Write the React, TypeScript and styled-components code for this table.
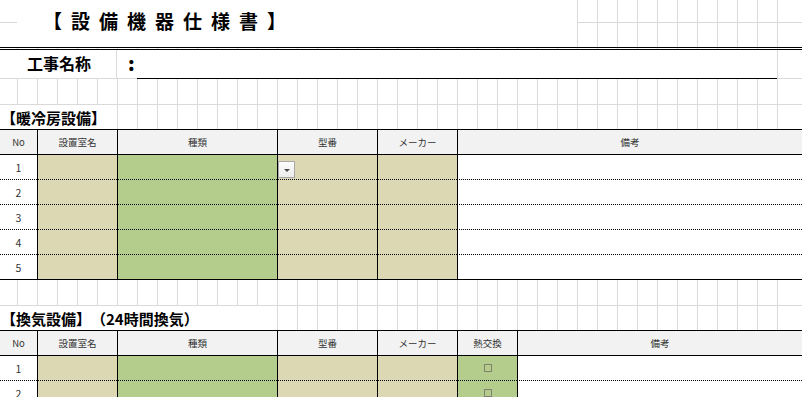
import React from "react";
import styled, { createGlobalStyle } from "styled-components";

const GRID = "#dadada";
const TAN = "#dcd8b4";
const GREEN = "#b4cc8c";
const HEAD = "#f2f2f2";

const Global = createGlobalStyle`
  html, body { margin: 0; padding: 0; background: #fff; }
  body { font-family: "Noto Sans CJK JP", "Noto Sans", sans-serif; color: #000; }
  * { box-sizing: border-box; }
`;

const Sheet = styled.div`
  width: 802px;
  height: 397px;
  overflow: hidden;
  position: relative;
  display: flex;
  flex-direction: column;
  background-color: #fff;
  background-image: linear-gradient(to right, transparent 778px, #fff 778px),
    linear-gradient(to right, ${GRID} 1px, transparent 1px);
  background-size: 100% 100%, 20px 100%;
  background-position: 0 0, 17px 0;
  background-repeat: no-repeat, repeat-x;
  text-spacing-trim: space-all;
`;

const TitleBand = styled.div`
  display: grid;
  grid-template-columns: 17px 560px 1fr;
  grid-template-rows: 23px 24px;
  height: 50px;
  flex: none;
  border-bottom: 3px double #000;
`;

const GridCell = styled.div<{ $col: number }>`
  grid-column: ${(p) => p.$col};
  grid-row: 1;
  border-bottom: 1px solid ${GRID};
`;

const TitleCell = styled.div`
  grid-column: 2;
  grid-row: 1 / 3;
  background: #fff;
  padding: 11px 0 0 26px;
  font-size: 19px;
  line-height: 19px;
  font-weight: 700;
  letter-spacing: 9px;
  white-space: nowrap;
`;

const ProjectRow = styled.div`
  display: flex;
  height: 29px;
  flex: none;
  background: #fff;
`;

const LabelCell = styled.div`
  width: 117px;
  border-right: 1px solid ${GRID};
  border-bottom: 1px solid ${GRID};
  padding: 0 0 2px 27px;
  display: flex;
  align-items: center;
  font-size: 16px;
  font-weight: 700;
  white-space: nowrap;
`;

const ColonCell = styled.div`
  width: 20px;
  border-bottom: 1px solid ${GRID};
  display: flex;
  align-items: center;
  padding: 0 0 3px 11px;
  font-size: 19px;
  font-weight: 900;
`;

const FieldCell = styled.div`
  width: 640px;
  border-bottom: 1px solid #000;
`;

const TailCell = styled.div`
  flex: 1;
  border-left: 1px solid ${GRID};
  border-bottom: 1px solid ${GRID};
`;

const BlankRow = styled.div<{ $h: number }>`
  height: ${(p) => p.$h}px;
  flex: none;
  border-bottom: 1px solid ${GRID};
`;

const SectionRow = styled.div`
  height: 24px;
  flex: none;
  display: flex;
`;

const SectionTitle = styled.div<{ $w: number }>`
  width: ${(p) => p.$w}px;
  background: #fff;
  padding-left: 1px;
  display: flex;
  align-items: center;
  font-size: 15px;
  font-weight: 700;
  white-space: nowrap;
`;

const Table = styled.div<{ $cols: string }>`
  display: grid;
  grid-template-columns: ${(p) => p.$cols};
  grid-auto-rows: 25px;
  border-top: 1px solid #000;
  flex: none;
`;

const HeadCell = styled.div<{ $first?: boolean }>`
  background: ${HEAD};
  border-bottom: 1px solid #000;
  border-left: ${(p) => (p.$first ? "none" : "1px solid #000")};
  display: flex;
  align-items: center;
  justify-content: center;
  font-size: 9.5px;
  color: #333;
  white-space: nowrap;
`;

type Tone = "white" | "tan" | "green";
const toneColor: Record<Tone, string> = { white: "#fff", tan: TAN, green: GREEN };

const DataCell = styled.div<{ $tone: Tone; $first?: boolean; $last?: boolean }>`
  position: relative;
  background: ${(p) => toneColor[p.$tone]};
  border-bottom: 1px ${(p) => (p.$last ? "solid" : "dotted")} #000;
  border-left: ${(p) => (p.$first ? "none" : "1px solid #000")};
  display: flex;
  align-items: center;
  justify-content: center;
  font-size: 10.5px;
  color: #333;
`;

const Dropdown = styled.div`
  position: absolute;
  left: 0;
  top: 6px;
  width: 17px;
  height: 17px;
  background: linear-gradient(#fdfdfd, #ececec);
  border: 1px solid #a9a9a9;
  display: flex;
  align-items: center;
  justify-content: center;
  &::after {
    content: "";
    border-left: 3px solid transparent;
    border-right: 3px solid transparent;
    border-top: 3px solid #4a4a4a;
    margin-top: 1px;
  }
`;

const CheckBox = styled.span`
  width: 8px;
  height: 8px;
  border: 1px solid #80806e;
`;

const cols1 = ["設置室名", "種類", "型番", "メーカー", "備考"];
const tones1: Tone[] = ["tan", "green", "tan", "tan", "white"];
const cols2 = ["設置室名", "種類", "型番", "メーカー", "熱交換", "備考"];
const tones2: Tone[] = ["tan", "green", "tan", "tan", "green", "white"];

function SpecTable({
  heads,
  tones,
  template,
  rows,
  closed,
  withDropdown,
  checkCol,
}: {
  heads: string[];
  tones: Tone[];
  template: string;
  rows: number;
  closed?: boolean;
  withDropdown?: boolean;
  checkCol?: number;
}) {
  return (
    <Table $cols={template}>
      <HeadCell $first>No</HeadCell>
      {heads.map((h) => (
        <HeadCell key={h}>{h}</HeadCell>
      ))}
      {Array.from({ length: rows }, (_, r) => {
        const last = !!closed && r === rows - 1;
        return (
          <React.Fragment key={r}>
            <DataCell $tone="white" $first $last={last}>
              {r + 1}
            </DataCell>
            {tones.map((t, c) => (
              <DataCell key={c} $tone={t} $last={last}>
                {withDropdown && r === 0 && c === 2 && <Dropdown />}
                {checkCol === c && <CheckBox />}
              </DataCell>
            ))}
          </React.Fragment>
        );
      })}
    </Table>
  );
}

export default function App() {
  return (
    <>
      <Global />
      <Sheet>
        <TitleBand>
          <GridCell $col={1} />
          <TitleCell>【設備機器仕様書】</TitleCell>
          <GridCell $col={3} />
        </TitleBand>
        <ProjectRow>
          <LabelCell>工事名称</LabelCell>
          <ColonCell>:</ColonCell>
          <FieldCell />
          <TailCell />
        </ProjectRow>
        <BlankRow $h={26} />
        <SectionRow>
          <SectionTitle $w={117}>【暖冷房設備】</SectionTitle>
        </SectionRow>
        <SpecTable
          heads={cols1}
          tones={tones1}
          template="37px 80px 160px 100px 80px 1fr"
          rows={5}
          closed
          withDropdown
        />
        <BlankRow $h={26} />
        <SectionRow>
          <SectionTitle $w={277}>【換気設備】（24時間換気）</SectionTitle>
        </SectionRow>
        <SpecTable
          heads={cols2}
          tones={tones2}
          template="37px 80px 160px 100px 80px 60px 1fr"
          rows={2}
          checkCol={4}
        />
      </Sheet>
    </>
  );
}
